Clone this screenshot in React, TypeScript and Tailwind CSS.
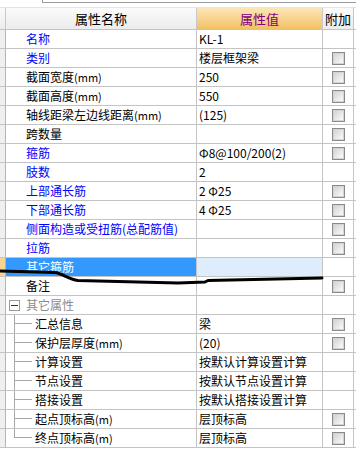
import React from 'react';

type Kind = 'normal' | 'selected' | 'group' | 'child';

interface Row {
  label: string;
  unit?: string;
  value?: string;
  color?: 'blue' | 'black';
  check?: boolean;
  kind?: Kind;
  last?: boolean;
}

const rows: Row[] = [
  { label: '名称', value: 'KL-1', color: 'blue' },
  { label: '类别', value: '楼层框架梁', color: 'blue', check: true },
  { label: '截面宽度', unit: '(mm)', value: '250', check: true },
  { label: '截面高度', unit: '(mm)', value: '550', check: true },
  { label: '轴线距梁左边线距离', unit: '(mm)', value: '(125)', check: true },
  { label: '跨数量', value: '', check: true },
  { label: '箍筋', value: 'Φ8@100/200(2)', color: 'blue', check: true },
  { label: '肢数', value: '2', color: 'blue' },
  { label: '上部通长筋', value: '2 Φ25', color: 'blue', check: true },
  { label: '下部通长筋', value: '4 Φ25', color: 'blue', check: true },
  { label: '侧面构造或受扭筋(总配筋值)', value: '', color: 'blue', check: true },
  { label: '拉筋', value: '', color: 'blue', check: true },
  { label: '其它箍筋', value: '', kind: 'selected' },
  { label: '备注', value: '', check: true },
  { label: '其它属性', kind: 'group' },
  { label: '汇总信息', value: '梁', kind: 'child', check: true },
  { label: '保护层厚度', unit: '(mm)', value: '(20)', kind: 'child', check: true },
  { label: '计算设置', value: '按默认计算设置计算', kind: 'child' },
  { label: '节点设置', value: '按默认节点设置计算', kind: 'child' },
  { label: '搭接设置', value: '按默认搭接设置计算', kind: 'child' },
  { label: '起点顶标高', unit: '(m)', value: '层顶标高', kind: 'child', check: true },
  { label: '终点顶标高', unit: '(m)', value: '层顶标高', kind: 'child', check: true, last: true },
];

const Check = () => (
  <div className="w-[13px] h-[13px] border border-[#8a8a8a] shadow-[inset_0_0_0_1px_#d4d4d4] bg-linear-to-br from-[#cfcfcf] to-white" />
);

const Label = ({ row, cls }: { row: Row; cls: string }) => (
  <span className={cls}>
    {row.label}
    {row.unit && <span className="text-[11px]">{row.unit}</span>}
  </span>
);

const PropRow = ({ row }: { row: Row }) => {
  const kind = row.kind ?? 'normal';
  const selected = kind === 'selected';
  const textColor = selected
    ? 'text-white'
    : kind === 'group'
    ? 'text-[#8c8c8c]'
    : row.color === 'blue'
    ? 'text-[#0000ff]'
    : 'text-black';

  return (
    <div className="flex h-[19px] border-b border-[#c4c4c4]">
      <div className={`w-[6px] shrink-0 border-r border-[#b4b4b4] ${selected ? 'bg-[#f8d391]' : 'bg-[#f0f0f0]'}`} />
      <div
        className={`w-[191px] shrink-0 flex items-center border-r border-[#c4c4c4] whitespace-nowrap overflow-hidden ${
          selected ? 'bg-[#3399ff]' : ''
        } ${kind === 'normal' || selected ? 'pl-[20px]' : ''}`}
      >
        {kind === 'group' && (
          <>
            <div className="ml-[3px] w-[11px] h-[11px] border border-[#9a9a9a] bg-white flex items-center justify-center">
              <div className="w-[7px] h-px bg-[#333]" />
            </div>
            <Label row={row} cls={`ml-[6px] ${textColor}`} />
          </>
        )}
        {kind === 'child' && (
          <>
            <div className="ml-[8px] w-[18px] h-full flex flex-col">
              <div className="h-[9px] border-l border-b border-[#a8a8a8]" />
              <div className={`flex-1 ${row.last ? '' : 'border-l border-[#a8a8a8]'}`} />
            </div>
            <Label row={row} cls={`ml-[3px] ${textColor}`} />
          </>
        )}
        {(kind === 'normal' || selected) && <Label row={row} cls={textColor} />}
      </div>
      <div
        className={`w-[126px] shrink-0 flex items-center pl-[2px] border-r border-[#c4c4c4] whitespace-pre overflow-hidden text-black ${
          selected ? 'bg-[#deedfc]' : ''
        }`}
      >
        {row.value}
      </div>
      <div className="w-[31px] shrink-0 flex items-center justify-center border-r border-[#c4c4c4]">
        {row.check && <Check />}
      </div>
    </div>
  );
};

export default function App() {
  return (
    <div
      className="relative w-[356px] h-[449px] bg-white overflow-hidden text-[12px] leading-none"
      style={{ fontFamily: '"Noto Sans CJK SC", "Liberation Sans", sans-serif' }}
    >
      <div className="h-[7px]">
        <div className="ml-[42px] h-[3px] border-l border-b border-[#9c9c9c]" />
      </div>

      <div className="flex h-[23px] border-b border-[#c4c4c4] border-t border-t-[#e4e4e4]">
        <div className="w-[6px] shrink-0 border-r border-[#c8c8c8] bg-linear-to-b from-[#fbfbfb] to-[#ececec]" />
        <div className="w-[191px] shrink-0 flex items-center justify-center border-r border-[#c8c8c8] bg-linear-to-b from-[#fbfbfb] to-[#ececec] text-black text-[13px]">
          属性名称
        </div>
        <div className="w-[126px] shrink-0 flex items-center justify-center border-r border-[#c8c8c8] bg-linear-to-b from-[#fce6b6] to-[#f2c062] text-[#800080] text-[13px]">
          属性值
        </div>
        <div className="w-[31px] shrink-0 flex items-center justify-center border-r border-[#c4c4c4] bg-linear-to-b from-[#fbfbfb] to-[#ececec] text-black text-[13px]">
          附加
        </div>
      </div>

      {rows.map((r) => (
        <PropRow key={r.label} row={r} />
      ))}

      <svg className="absolute inset-0 pointer-events-none" width="356" height="449">
        <path
          d="M0 271 L55 272.5 C62 273 68 279.5 78 280.5 L178 283 L205 282 L208 280.5 L322 278"
          fill="none"
          stroke="#000"
          strokeWidth="3"
          strokeLinecap="round"
          strokeLinejoin="round"
        />
      </svg>
    </div>
  );
}
